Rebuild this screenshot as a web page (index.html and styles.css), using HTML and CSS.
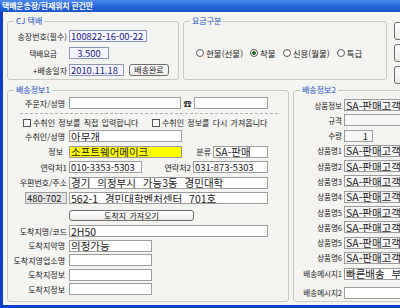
FILE: index.html
```html
<!DOCTYPE html>
<html lang="ko">
  <head>
    <meta charset="UTF-8" />
    <title>택배운송장/현재위치 한건만</title>
    <link rel="stylesheet" href="styles.css">
  </head>
  <body>
    <div class="window">
      <div class="titlebar">택배운송장/현재위치 한건만</div>

      <div class="client">
        <div class="top-row">
          <!-- CJ 택배 -->
          <div class="group group-cj">
            <span class="group-title">CJ 택배</span>
            <div class="row">
              <label class="lbl">송장번호(필수)</label>
              <input class="txt txt-navy num w-invoice" value="100822-16-00-22">
            </div>
            <div class="row">
              <label class="lbl lbl-fee">택배요금</label>
              <input class="txt txt-navy num w-fee center" value="3.500">
            </div>
            <div class="row">
              <label class="lbl">+배송일자</label>
              <input class="txt txt-navy num w-date" value="2010.11.18">
              <button class="btn btn-done">배송완료</button>
            </div>
          </div>

          <!-- 요금구분 -->
          <div class="group group-fee">
            <span class="group-title">요금구분</span>
            <div class="radios">
              <label class="opt"><input type="radio" name="fee">현불(선불)</label>
              <label class="opt"><input type="radio" name="fee" checked>착불</label>
              <label class="opt"><input type="radio" name="fee">신용(월불)</label>
              <label class="opt"><input type="radio" name="fee">특급</label>
            </div>
          </div>

          <div class="side-buttons">
            <button class="btn side"></button>
            <button class="btn side"></button>
            <button class="btn side"></button>
          </div>
        </div>

        <div class="bottom-row">
          <!-- 배송정보1 -->
          <div class="group group-info1">
            <span class="group-title">배송정보1</span>
            <div class="row">
              <label class="lbl lbl-in">주문자/성명</label>
              <input class="txt w-orderer" value="">
              <span class="phone">☎</span>
              <input class="txt w-phone" value="">
            </div>
            <div class="sep"></div>
            <div class="checks">
              <label class="chk chk-1"><input type="checkbox">수취인 정보를 직접 입력합니다</label>
              <label class="chk"><input type="checkbox">수취인 정보를 다시 가져옵니다</label>
            </div>

            <div class="stack receiver">
              <div class="row">
                <label class="lbl lbl-in">수취인/성명</label>
                <input class="txt w-name" value="아무개">
              </div>
              <div class="row">
                <label class="lbl lbl-info">정보</label>
                <input class="txt txt-yellow w-name" value="소프트웨어메이크">
                <label class="lbl lbl-kind">분류</label>
                <input class="txt w-kind" value="SA-판매">
              </div>
              <div class="row">
                <label class="lbl">연락처1</label>
                <input class="txt num w-tel1" value="010-3353-5303">
                <label class="lbl lbl-tel2">연락처2</label>
                <input class="txt num w-tel2" value="031-873-5303">
              </div>
              <div class="row">
                <label class="lbl">우편번호/주소</label>
                <input class="txt w-full" value="경기 의정부시 가능3동 경민대학">
              </div>
              <div class="row">
                <input class="txt txt-gray num w-zip" value="480-702">
                <input class="txt w-full" value="562-1 경민대학벤처센터 701호">
              </div>
            </div>

            <div class="row fetch">
              <button class="btn btn-fetch">도착지 가져오기</button>
            </div>

            <div class="stack dest">
              <div class="row">
                <label class="lbl">도착지명/코드</label>
                <input class="txt w-full" value="2H50">
              </div>
              <div class="row">
                <label class="lbl lbl-in">도착지약명</label>
                <input class="txt w-dest" value="의정가능">
              </div>
              <div class="row">
                <label class="lbl lbl-in">도착지영업소명</label>
                <input class="txt w-dest" value="">
              </div>
              <div class="row">
                <label class="lbl lbl-in">도착지정보</label>
                <input class="txt w-dest" value="">
              </div>
              <div class="row">
                <label class="lbl lbl-in">도착지정보</label>
                <input class="txt w-dest" value="">
              </div>
            </div>
          </div>

          <!-- 배송정보2 -->
          <div class="group group-info2">
            <span class="group-title">배송정보2</span>
            <div class="stack goods">
              <div class="row"><label class="lbl">상품정보</label><input class="txt txt-soft w-goods" value="SA-판매고객"></div>
              <div class="row"><label class="lbl">규격</label><input class="txt txt-soft w-goods" value=""></div>
              <div class="row"><label class="lbl">수량</label><input class="txt txt-soft num w-qty right" value="1"></div>
              <div class="row"><label class="lbl">상품명1</label><input class="txt txt-soft w-goods" value="SA-판매고객"></div>
              <div class="row"><label class="lbl">상품명2</label><input class="txt txt-soft w-goods" value="SA-판매고객"></div>
              <div class="row"><label class="lbl">상품명3</label><input class="txt txt-soft w-goods" value="SA-판매고객"></div>
              <div class="row"><label class="lbl">상품명4</label><input class="txt txt-soft w-goods" value="SA-판매고객"></div>
              <div class="row"><label class="lbl">상품명5</label><input class="txt txt-soft w-goods" value="SA-판매고객"></div>
              <div class="row"><label class="lbl">상품명6</label><input class="txt txt-soft w-goods" value="SA-판매고객"></div>
              <div class="row"><label class="lbl">상품명5</label><input class="txt txt-soft w-goods" value="SA-판매고객"></div>
              <div class="row"><label class="lbl">상품명6</label><input class="txt txt-soft w-goods" value="SA-판매고객"></div>
            </div>
            <div class="row msg1">
              <label class="lbl">배송메시지1</label>
              <input class="txt w-goods" value="빠른배송 부탁드립니다">
            </div>
            <div class="row msg2">
              <label class="lbl">배송메시지2</label>
              <input class="txt w-goods" value="">
            </div>
          </div>
        </div>
      </div>
    </div>
  </body>
</html>
```

FILE: styles.css
```css
* {
  box-sizing: border-box;
}

body {
  margin: 0;
  background: #fff;
  font-family: "Noto Sans CJK KR", "Noto Sans", sans-serif;
  font-size: 8px;
  color: #222;
}

.window {
  width: 400px;
  height: 308px;
  overflow: hidden;
  display: flex;
  flex-direction: column;
}

.titlebar {
  height: 12px;
  flex: none;
  padding-left: 2px;
  background: linear-gradient(#4a8cee, #2362d9 55%, #1a56cc);
  color: #fff;
  font-weight: 700;
  font-size: 8px;
  line-height: 12px;
  letter-spacing: -0.2px;
  white-space: nowrap;
}

.client {
  flex: 1;
  background: #f4f4f1;
  border-left: 3px solid #0b3fc9;
  border-bottom: 3px solid #0b3fc9;
  padding: 9px 0 0 4px;
  overflow: hidden;
}

.top-row {
  display: flex;
  align-items: flex-start;
  height: 59px;
}

.bottom-row {
  display: flex;
  align-items: flex-start;
  margin-top: 10px;
}

/* group boxes */
.group {
  position: relative;
  flex: none;
  border: 1px solid #c9c9c0;
  border-radius: 3px;
}

.group-title {
  position: absolute;
  top: -6px;
  left: 6px;
  padding: 0 2px;
  background: #f4f4f1;
  color: #2350c8;
  line-height: 10px;
  white-space: nowrap;
}

.group-cj {
  width: 172px;
  height: 59px;
  padding-top: 8px;
}

.group-cj .row + .row {
  margin-top: 5px;
}

.group-fee {
  width: 204px;
  height: 59px;
  margin-left: 4px;
  padding: 26px 0 0 12px;
}

.group-info1 {
  width: 282px;
  height: 212px;
  padding-top: 6px;
}

.group-info2 {
  width: 120px;
  height: 212px;
  margin-left: 4px;
  padding-top: 8px;
}

/* rows */
.row {
  display: flex;
  align-items: center;
  height: 12px;
}

.lbl {
  flex: none;
  width: 59px;
  margin-right: 2px;
  text-align: right;
  white-space: nowrap;
}

.lbl-fee {
  padding-right: 10px;
  font-size: 7.5px;
}

.lbl-in {
  padding-right: 2px;
}

.lbl-info {
  padding-right: 4px;
}

.lbl-kind {
  width: 29px;
}

.lbl-tel2 {
  width: 49px;
}

.group-info2 .lbl {
  width: 48px;
  font-size: 7.5px;
}

.stack {
  display: flex;
  flex-direction: column;
}

.receiver {
  margin-top: 3px;
  gap: 3.5px;
}

.dest {
  margin-top: 4px;
  gap: 2.5px;
}

.goods {
  gap: 3.3px;
}

.fetch {
  margin-top: 6px;
  height: 11px;
  padding-left: 61px;
}

.msg1 {
  margin-top: 4px;
}

.msg2 {
  margin-top: 7px;
}

/* text boxes */
.txt {
  flex: none;
  height: 12px;
  margin: 0;
  padding: 0 1px;
  border: 1px solid #9c9c9c;
  background: #fff;
  font-family: "Noto Sans CJK KR", "Noto Sans", sans-serif;
  font-size: 10.5px;
  word-spacing: 4px;
  color: #1a1a1a;
  outline: none;
}

.num {
  font-size: 9.4px;
  word-spacing: 0;
}

.txt-navy {
  border-color: #8c96b8;
  background: #f6f6ff;
  color: #1b2088;
}

.txt-yellow {
  background: #ffff00;
}

.txt-gray {
  background: #e4e4e4;
}

.txt-soft {
  background: #f6f6f6;
}

.center {
  text-align: center;
}

.right {
  padding-right: 4px;
  text-align: right;
}

.w-invoice { width: 78px; }
.w-fee { width: 40px; }
.w-date { width: 55px; }
.w-orderer { width: 112px; }
.w-phone { width: 74px; }
.w-name { width: 113px; }
.w-kind { width: 55px; }
.w-tel1 { width: 73px; }
.w-tel2 { width: 75px; }
.w-full { width: 199px; }
.w-zip { width: 42px; margin: 0 2px 0 17px; }
.w-dest { width: 83px; }
.w-goods { width: 80px; }
.w-qty { width: 29px; }

.phone {
  width: 13px;
  text-align: center;
  font-size: 8px;
}

/* buttons */
.btn {
  margin: 0;
  padding: 0;
  border: 1px solid #6d6d6d;
  border-radius: 3px;
  background: linear-gradient(#ffffff, #ecebe6);
  font-family: "Noto Sans CJK KR", "Noto Sans", sans-serif;
  font-size: 8px;
  word-spacing: 1px;
  color: #222;
  line-height: 1;
}

.btn-done {
  width: 40px;
  height: 12px;
  margin-left: 5px;
}

.btn-fetch {
  width: 125px;
  height: 11px;
}

.side-buttons {
  display: flex;
  flex-direction: column;
  gap: 4px;
  margin: 1px 0 0 7px;
}

.side {
  width: 24px;
  height: 18px;
}

/* separator + checks */
.sep {
  margin: 4px 10px 0 12px;
  border-top: 1px dashed #b0b0b0;
}

.checks {
  display: flex;
  align-items: center;
  height: 9px;
  margin-top: 4px;
  padding-left: 15px;
  word-spacing: 1px;
}

.chk,
.opt {
  display: flex;
  align-items: center;
  white-space: nowrap;
}

.chk-1 {
  width: 129px;
}

.chk input {
  appearance: none;
  width: 8px;
  height: 8px;
  margin: 0 2px 0 0;
  border: 1px solid #555;
  background: #fff;
}

/* radios */
.radios {
  display: flex;
  align-items: center;
  gap: 7px;
  height: 10px;
  font-size: 8.5px;
}

.opt input {
  appearance: none;
  width: 8px;
  height: 8px;
  margin: 0 2px 0 0;
  border: 1px solid #555;
  border-radius: 50%;
  background: #fff;
}

.opt input:checked {
  background: radial-gradient(circle, #2f6a2f 0 1.6px, #fff 2.2px);
}
```
